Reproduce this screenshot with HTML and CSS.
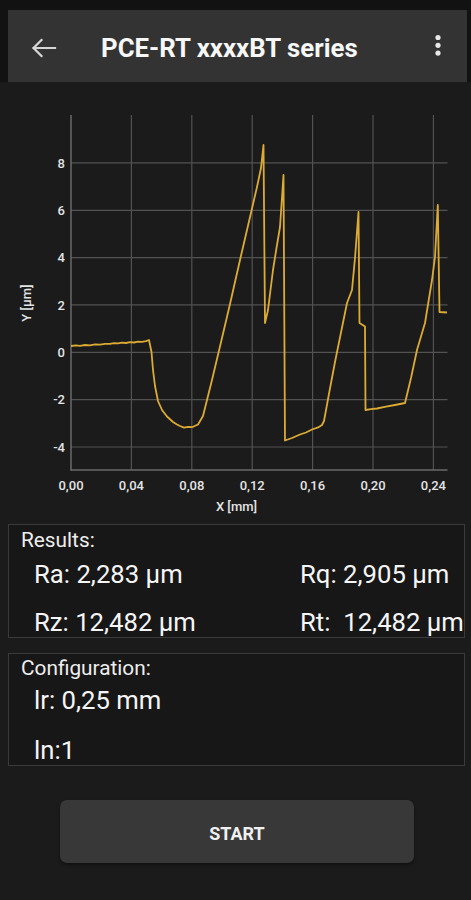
FILE: index.html
```html
<!DOCTYPE html>
<html lang="en">
<head>
<meta charset="utf-8">
<title>PCE-RT xxxxBT series</title>
<link rel="stylesheet" href="styles.css">
</head>
<body>
<div class="topbar">
  <div class="toolbar">
    <svg class="back" viewBox="0 0 32 32" width="32" height="32">
      <path class="icon-stroke" d="M27 18H5.5M13.5 10L5.5 18l8 8"/>
    </svg>
    <div class="title">PCE-RT xxxxBT series</div>
    <svg class="more" viewBox="0 0 24 24" width="24" height="24">
      <circle class="icon-fill" cx="12" cy="3.5" r="2.6"/>
      <circle class="icon-fill" cx="12" cy="11.3" r="2.6"/>
      <circle class="icon-fill" cx="12" cy="19.1" r="2.6"/>
    </svg>
  </div>
</div>

<svg class="chart" viewBox="0 82 471 442" width="471" height="442">
  <g class="grid">
    <line x1="131.4" y1="115" x2="131.4" y2="470"/>
    <line x1="191.8" y1="115" x2="191.8" y2="470"/>
    <line x1="252.2" y1="115" x2="252.2" y2="470"/>
    <line x1="312.6" y1="115" x2="312.6" y2="470"/>
    <line x1="373" y1="115" x2="373" y2="470"/>
    <line x1="433.4" y1="115" x2="433.4" y2="470"/>
    <line x1="71" y1="162.9" x2="447.5" y2="162.9"/>
    <line x1="71" y1="210.3" x2="447.5" y2="210.3"/>
    <line x1="71" y1="257.6" x2="447.5" y2="257.6"/>
    <line x1="71" y1="304.9" x2="447.5" y2="304.9"/>
    <line x1="71" y1="352.3" x2="447.5" y2="352.3"/>
    <line x1="71" y1="399.6" x2="447.5" y2="399.6"/>
    <line x1="71" y1="447" x2="447.5" y2="447"/>
  </g>
  <g class="axis">
    <line x1="71" y1="115" x2="71" y2="470.5"/>
    <line x1="70.5" y1="470" x2="447.5" y2="470"/>
  </g>
  <g class="ytick">
    <text x="65" y="167.5">8</text>
    <text x="65" y="214.9">6</text>
    <text x="65" y="262.2">4</text>
    <text x="65" y="309.5">2</text>
    <text x="65" y="356.9">0</text>
    <text x="65" y="404.2">-2</text>
    <text x="65" y="451.6">-4</text>
  </g>
  <g class="xtick">
    <text x="71" y="489.5">0,00</text>
    <text x="131.4" y="489.5">0,04</text>
    <text x="191.8" y="489.5">0,08</text>
    <text x="252.2" y="489.5">0,12</text>
    <text x="312.6" y="489.5">0,16</text>
    <text x="373" y="489.5">0,20</text>
    <text x="433.4" y="489.5">0,24</text>
  </g>
  <text class="axis-title" x="236.5" y="511">X [mm]</text>
  <text class="axis-title" transform="translate(30.5 303) rotate(-90)">Y [µm]</text>
  <path class="curve" d="M71 346 L76 345.4 L80 345.8 L85 345 L90 345.3 L95 344.4 L100 344.6 L105 343.8 L110 343.9 L114 343.1 L118 343.4 L122 342.6 L126 343 L130 342.2 L134 342.5 L138 341.6 L142 341.9 L146 341.2 L149 340 L151.5 352 L153 370 L155 386 L158 401 L162 410 L167 416.5 L173 422 L177 424.5 L180 426 L184 427.6 L188 426.8 L192 427.2 L198 424.5 L203 416 L207.5 398 L212 380 L217 359 L222 338 L226 321 L230 304 L235 282 L240 260 L243.5 245 L247 230 L252 208.5 L257 187 L261 168 L263.5 145 L265 323 L268 310 L270.5 290 L273 270 L276.5 248 L280 227 L283.5 175 L285 440.5 L292 438 L300 434.5 L306 432.5 L312 429.5 L318 427.4 L322 425 L324 421 L329.5 391 L335 362 L341 332.5 L347 303 L352 290 L355 258 L358.5 212 L359.5 323 L365 326.5 L365.5 410 L371 409.2 L377 408.5 L386 406.6 L395 405 L405 403 L411 378 L417 350 L425 323 L432 280 L435 257 L437.8 205 L439.5 312 L447 312.5"/>
</svg>

<section class="panel results">
  <div class="panel-label">Results:</div>
  <div class="values">
    <div class="value">Ra: 2,283 µm</div>
    <div class="value">Rq: 2,905 µm</div>
    <div class="value">Rz: 12,482 µm</div>
    <div class="value">Rt:  12,482 µm</div>
  </div>
</section>

<section class="panel config">
  <div class="panel-label">Configuration:</div>
  <div class="config-rows">
    <div class="value">lr: 0,25 mm</div>
    <div class="value">ln:1</div>
  </div>
</section>

<button class="start">START</button>
</body>
</html>
```
FILE: styles.css
```css
* { box-sizing: border-box; }

html, body {
  margin: 0;
  padding: 0;
}

body {
  width: 471px;
  min-height: 900px;
  background: #1b1b1b;
  font-family: Roboto, "Liberation Sans", Arial, sans-serif;
  color: #f2f2f2;
  overflow: hidden;
}

.topbar {
  background: #121212;
  padding: 10px 4px 0 8px;
}

.toolbar {
  height: 72px;
  background: #333333;
  display: flex;
  align-items: center;
}

.back {
  display: block;
  margin-left: 20px;
  flex: none;
}

.icon-stroke {
  fill: none;
  stroke: #d6d6d6;
  stroke-width: 2.2;
  stroke-linecap: square;
}

.icon-fill {
  fill: #e8e8e8;
}

.title {
  margin-left: 41px;
  margin-top: 4px;
  font-size: 25.8px;
  line-height: 28px;
  font-weight: 700;
  color: #f7f7f7;
  white-space: nowrap;
}

.more {
  display: block;
  margin-left: auto;
  margin-right: 17px;
  flex: none;
}

.chart {
  display: block;
}

.grid line {
  stroke: #525252;
  stroke-width: 1.2;
}

.axis line {
  stroke: #6a6a6a;
  stroke-width: 1.5;
}

.ytick text,
.xtick text,
.axis-title {
  font-family: Roboto, "Liberation Sans", Arial, sans-serif;
  font-size: 13px;
  font-weight: 500;
  fill: #e4e4e4;
}

.ytick text {
  text-anchor: end;
}

.xtick text,
.axis-title {
  text-anchor: middle;
}

.curve {
  fill: none;
  stroke: #dcab34;
  stroke-width: 1.8;
  stroke-linejoin: round;
}

.panel {
  margin: 0 6px 0 8px;
  border: 1px solid #3a3a3a;
  background: #171717;
}

.results {
  padding: 3px 0 1px 12px;
}

.config {
  margin-top: 15px;
  padding: 2px 0 1px 12px;
}

.panel-label {
  font-size: 20.8px;
  line-height: 24px;
  color: #eeeeee;
}

.values {
  display: grid;
  grid-template-columns: 266px auto;
  row-gap: 20px;
  margin: 8px 0 0 13px;
}

.config-rows {
  display: grid;
  row-gap: 22px;
  margin: 6px 0 0 13px;
}

.value {
  font-size: 25.7px;
  line-height: 28px;
  color: #f5f5f5;
  white-space: pre;
}

.start {
  display: block;
  margin: 34px 0 0 60px;
  width: 354px;
  height: 63px;
  padding: 3px 0 0 0;
  border: none;
  border-radius: 7px;
  background: #383838;
  color: #f0f0f0;
  font-family: Roboto, "Liberation Sans", Arial, sans-serif;
  font-size: 18px;
  font-weight: 700;
  box-shadow: 0 2px 3px rgba(0, 0, 0, 0.35);
}
```
